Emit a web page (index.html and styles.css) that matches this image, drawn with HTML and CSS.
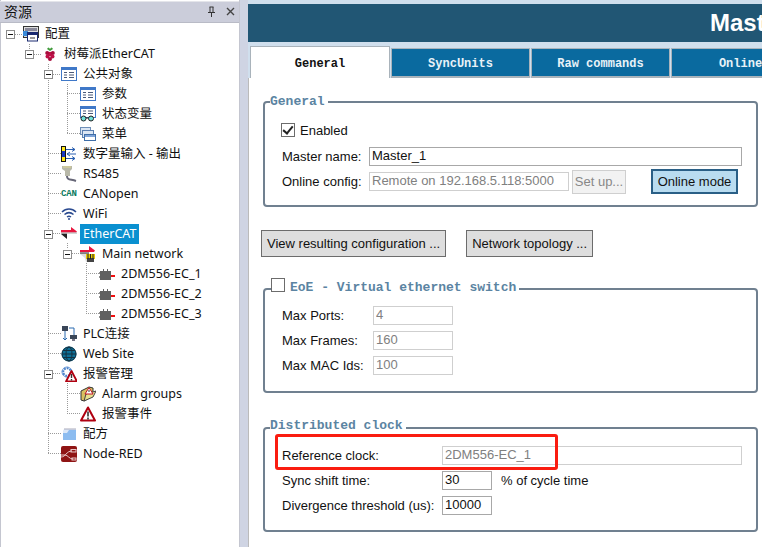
FILE: index.html
```html
<!DOCTYPE html>
<html lang="zh">
<head>
    <meta charset="UTF-8">
    <meta name="viewport" content="width=device-width, initial-scale=1.0">
    <title>EtherCAT Master</title>
    <link rel="stylesheet" href="styles.css">
</head>
<body>
    <svg class="icon-defs" aria-hidden="true">
        <symbol id="i-list" viewBox="0 0 16 16">
            <rect x=".5" y="1.500" width="15" height="13" fill="#fff" stroke="#3f78c8"/>
            <rect x="1" y="2" width="14" height="2" fill="#3f78c8"/>
            <path d="M3 6.500h3M3 9h3M3 11.500h3M8 6.500h5M8 9h5M8 11.500h5" stroke="#4a5a78"/>
        </symbol>
        <symbol id="i-ecat" viewBox="0 0 16 16">
            <path d="M0 4h10V1l6 4.500-1 1H0z" fill="#e8173f"/>
            <path d="M16 7.500H6V13L0 8l1-.5h15z" fill="#222"/>
            <path d="M0 7h16" stroke="#aaa"/>
        </symbol>
        <symbol id="i-device" viewBox="0 0 16 16">
            <path d="M1 5h3V3h1v2h3V3h1v2h3v9H1z" fill="#606060"/>
            <path d="M0 7h1M0 11h1" stroke="#222"/>
            <path d="M12 10h4" stroke="#f01010" stroke-width="2"/>
        </symbol>
        <symbol id="i-triangle" viewBox="0 0 16 16">
            <path d="M8 1.500 15 14.500H1z" fill="#fff" stroke="#b00010" stroke-width="2" stroke-linejoin="round"/>
            <path d="M8 5.500v5M8 11.500v2" stroke="#333" stroke-width="1.600"/>
        </symbol>
    </svg>

    <aside class="sidebar">
        <div class="sidebar-title">
            <span>资源</span>
            <span class="title-tools">
                <svg width="9" height="11" viewBox="0 0 9 11"><path d="M2.500 1h4M3 1v5M6 1v5M1 6.500h7M4.500 7v4" stroke="#333"/></svg>
                <svg width="9" height="9" viewBox="0 0 9 9"><path d="M1 1l7 7M8 1 1 8" stroke="#444" stroke-width="1.400"/></svg>
            </span>
        </div>

        <svg class="tree-lines" width="240" height="480" aria-hidden="true">
            <path d="M15 34.500h8M29.500 44v6M34 54.500h8M48.500 64v389.500M53 74.500h8M67.500 84v49.500M67 93.500h13M67 113.500h13M67 133.500h13M48 153.500h13M48 173.500h13M48 193.500h13M48 213.500h13M53 233.500h8M67.500 243v6M72 253.500h8M86.500 263v50.500M86 273.500h13M86 293.500h13M86 313.500h13M48 333.500h13M48 353.500h13M53 373.500h8M67.500 383v30.500M67 393.500h13M67 413.500h13M48 433.500h13M48 453.500h13" fill="none" stroke="#9a9a9a" stroke-dasharray="1 1"/>
        </svg>

        <ul class="tree">
            <li class="row lv0"><span class="tog"></span>
                <svg class="ico" viewBox="0 0 16 16"><rect x=".5" y=".5" width="15" height="11" fill="#ddd" stroke="#333"/><rect x="2" y="2" width="12" height="3" fill="#889"/><rect x="0" y="5" width="5" height="5" fill="#3a8ad8"/><rect x="4.500" y="6.500" width="10" height="8.500" fill="#fff" stroke="#1a2a70"/><rect x="5" y="7" width="9" height="2" fill="#1a2a70"/><rect x="7" y="11" width="5" height="2" fill="#999"/></svg>
                <span class="label">配置</span></li>
            <li class="row lv1"><span class="tog"></span>
                <svg class="ico" viewBox="0 0 16 16"><path d="M5 3c1-2 2-2 3 0 1-2 2-2 3 0l-3 2z" fill="#3f9a3a"/><circle cx="8" cy="8" r="2.200" fill="#c01048"/><circle cx="5.200" cy="7" r="2" fill="#a80c3c"/><circle cx="10.800" cy="7" r="2" fill="#a80c3c"/><circle cx="5.500" cy="10.500" r="2" fill="#c01048"/><circle cx="10.500" cy="10.500" r="2" fill="#c01048"/><circle cx="8" cy="13" r="2" fill="#a80c3c"/></svg>
                <span class="label">树莓派EtherCAT</span></li>
            <li class="row lv2"><span class="tog"></span>
                <svg class="ico"><use href="#i-list"/></svg>
                <span class="label">公共对象</span></li>
            <li class="row lv3"><span class="tog off"></span>
                <svg class="ico"><use href="#i-list"/></svg>
                <span class="label">参数</span></li>
            <li class="row lv3"><span class="tog off"></span>
                <svg class="ico" viewBox="0 0 16 16"><rect x=".5" y=".5" width="15" height="11" fill="#fff" stroke="#3f78c8"/><rect x="1" y="1" width="14" height="2" fill="#3f78c8"/><path d="M3 5h3M3 7.500h3M8 5h5M8 7.500h5" stroke="#4a5a78"/><circle cx="3.500" cy="12.500" r="2.500" fill="#6fe0d8" stroke="#222"/><circle cx="11" cy="12.500" r="2.500" fill="#6fe0d8" stroke="#222"/><path d="M6 12h2.500" stroke="#222"/></svg>
                <span class="label">状态变量</span></li>
            <li class="row lv3"><span class="tog off"></span>
                <svg class="ico" viewBox="0 0 16 16"><rect x=".5" y="1.500" width="10" height="7" fill="#dbe6f4" stroke="#6f8fb8"/><rect x="2.500" y="4.500" width="11" height="7" fill="#dbe6f4" stroke="#5a7fb0"/><rect x="4.500" y="8.500" width="11" height="6" fill="#fff" stroke="#3f6ea8"/><rect x="5" y="9" width="10" height="2" fill="#7fa4d8"/></svg>
                <span class="label">菜单</span></li>
            <li class="row lv2"><span class="tog off"></span>
                <svg class="ico" viewBox="0 0 16 16"><rect x=".5" y=".5" width="4" height="15" fill="#ffe81a" stroke="#111"/><rect x="1" y="5" width="3" height="6" fill="#1838c0"/><path d="M5 3.500h9M11 1.500l3 2-3 2M15 8H6M9 6 6 8l3 2M5 12.500h9M11 10.500l3 2-3 2" fill="none" stroke="#2a5fb0"/></svg>
                <span class="label">数字量输入 - 输出</span></li>
            <li class="row lv2"><span class="tog off"></span>
                <svg class="ico" viewBox="0 0 16 16"><path d="M1 0h10v3L9 5v5H4V5L1 3z" fill="#b8b8a8"/><path d="M2 1h8" stroke="#e0d890"/><path d="M6 10c0 4 3 3 9 5" fill="none" stroke="#667" stroke-width="2"/></svg>
                <span class="label">RS485</span></li>
            <li class="row lv2"><span class="tog off"></span>
                <span class="can-text">CAN</span>
                <span class="label">CANopen</span></li>
            <li class="row lv2"><span class="tog off"></span>
                <svg class="ico" viewBox="0 0 16 16"><path d="M1 6c4-4 10-4 14 0M3.500 8.500c3-2.500 6-2.500 9 0M6 11c1.500-1 2.500-1 4 0" fill="none" stroke="#2a4a90" stroke-width="1.500"/><path d="M7 13h2" stroke="#2a4a90" stroke-width="1.500"/></svg>
                <span class="label">WiFi</span></li>
            <li class="row lv2"><span class="tog"></span>
                <svg class="ico"><use href="#i-ecat"/></svg>
                <span class="label selected">EtherCAT</span></li>
            <li class="row lv3"><span class="tog"></span>
                <svg class="ico" viewBox="0 0 16 16"><path d="M0 4h9V0l6 4.500-1 1.500H0z" fill="#e8173f"/><path d="M0 7h9v9H6L5 12 0 8z" fill="#ddd"/><path d="M0 7h9" stroke="#222"/><rect x="6" y="8" width="9" height="5" fill="#e8c800"/><rect x="7" y="12" width="7" height="4" fill="#444"/><path d="M8 8v5M10.500 8v5M13 8v5" stroke="#222"/></svg>
                <span class="label">Main network</span></li>
            <li class="row lv4"><span class="tog off"></span>
                <svg class="ico"><use href="#i-device"/></svg>
                <span class="label">2DM556-EC_1</span></li>
            <li class="row lv4"><span class="tog off"></span>
                <svg class="ico"><use href="#i-device"/></svg>
                <span class="label">2DM556-EC_2</span></li>
            <li class="row lv4"><span class="tog off"></span>
                <svg class="ico"><use href="#i-device"/></svg>
                <span class="label">2DM556-EC_3</span></li>
            <li class="row lv2"><span class="tog off"></span>
                <svg class="ico" viewBox="0 0 16 16"><rect x="1" y="0" width="6" height="5" fill="#3a4658"/><rect x="9" y="9" width="7" height="4" fill="#3a4658"/><rect x="11" y="13" width="3" height="2" fill="#778"/><path d="M4 5v9M8 2h5v7" fill="none" stroke="#2a6ab0"/><path d="M2 12l2 2 2-2" fill="none" stroke="#2a6ab0"/></svg>
                <span class="label">PLC连接</span></li>
            <li class="row lv2"><span class="tog off"></span>
                <svg class="ico" viewBox="0 0 16 16"><circle cx="8" cy="8" r="7.500" fill="#0d6f96"/><circle cx="8" cy="8" r="7" fill="none" stroke="#143040"/><ellipse cx="8" cy="8" rx="3" ry="7" fill="none" stroke="#143040"/><path d="M1 8h14M2 4.500h12M2 11.500h12" stroke="#143040"/></svg>
                <span class="label">Web Site</span></li>
            <li class="row lv2"><span class="tog"></span>
                <svg class="ico" viewBox="0 0 16 16"><circle cx="6" cy="6" r="4" fill="#fff" stroke="#4a80c8" stroke-width="2.500" stroke-dasharray="2 1"/><circle cx="6" cy="6" r="5" fill="none" stroke="#7aa4dc"/><path d="M10.500 5 16 15.500H5z" fill="#fff" stroke="#b00010" stroke-width="1.800" stroke-linejoin="round"/><path d="M10.500 8v4M10.500 13v1.500" stroke="#333" stroke-width="1.400"/></svg>
                <span class="label">报警管理</span></li>
            <li class="row lv3"><span class="tog off"></span>
                <svg class="ico" viewBox="0 0 16 16"><path d="M1 5 9 1l4 1v8l-9 5-3-1z" fill="#d8c060" stroke="#333"/><path d="M4 15l2-7 10-3-3 6z" fill="#e8e090" stroke="#444"/><path d="M9 1.500 13 8H5z" fill="#fff" stroke="#c01020"/><path d="M9 4v2" stroke="#333"/></svg>
                <span class="label">Alarm groups</span></li>
            <li class="row lv3"><span class="tog off"></span>
                <svg class="ico"><use href="#i-triangle"/></svg>
                <span class="label">报警事件</span></li>
            <li class="row lv2"><span class="tog off"></span>
                <svg class="ico" viewBox="0 0 16 16"><path d="M2 5 3 3h12v11H2z" fill="#dce8f8"/><path d="M2 7h4l2-3h7v10H2z" fill="#8cbcf0"/><path d="M3 3h12" stroke="#aab"/></svg>
                <span class="label">配方</span></li>
            <li class="row lv2"><span class="tog off"></span>
                <svg class="ico" viewBox="0 0 16 16"><rect width="16" height="16" rx="2" fill="#8f1414"/><path d="M0 11c5 0 5-6 11-6M0 9h4c3 0 4 4 8 4" fill="none" stroke="#e8c8c8"/><rect x="10" y="3.500" width="5" height="2.500" fill="none" stroke="#e8c8c8"/><rect x="11" y="12" width="4" height="2" fill="none" stroke="#e8c8c8"/></svg>
                <span class="label">Node-RED</span></li>
        </ul>
    </aside>

    <main class="main">
        <div class="banner"><h1>Master</h1></div>

        <div class="tabs">
            <div class="tab active">General</div>
            <div class="tab">SyncUnits</div>
            <div class="tab">Raw commands</div>
            <div class="tab">Online</div>
        </div>

        <div class="panel">
            <fieldset class="group first">
                <legend>General</legend>
                <label class="check-row"><input type="checkbox" checked> Enabled</label>
                <div class="field general-field">
                    <label>Master name:</label>
                    <input class="grow" type="text" value="Master_1">
                </div>
                <div class="field general-field">
                    <label>Online config:</label>
                    <input class="online-input" type="text" value="Remote on 192.168.5.118:5000" disabled>
                    <button class="setup-btn" disabled>Set up...</button>
                    <button class="online-btn">Online mode</button>
                </div>
            </fieldset>

            <div class="actions">
                <button class="action-btn">View resulting configuration ...</button>
                <button class="action-btn">Network topology ...</button>
            </div>

            <fieldset class="group eoe">
                <legend><input type="checkbox"> EoE - Virtual ethernet switch</legend>
                <div class="field eoe-field">
                    <label>Max Ports:</label>
                    <input class="short" type="text" value="4" disabled>
                </div>
                <div class="field eoe-field">
                    <label>Max Frames:</label>
                    <input class="short" type="text" value="160" disabled>
                </div>
                <div class="field eoe-field">
                    <label>Max MAC Ids:</label>
                    <input class="short" type="text" value="100" disabled>
                </div>
            </fieldset>

            <fieldset class="group clock">
                <legend>Distributed clock</legend>
                <div class="field clock-field">
                    <label>Reference clock:</label>
                    <input class="grow" type="text" value="2DM556-EC_1" disabled>
                </div>
                <div class="field clock-field">
                    <label>Sync shift time:</label>
                    <input class="tiny" type="text" value="30">
                    <span class="unit">% of cycle time</span>
                </div>
                <div class="field clock-field">
                    <label>Divergence threshold (us):</label>
                    <input class="tiny" type="text" value="10000">
                </div>
                <div class="red-box"></div>
            </fieldset>
        </div>
    </main>
</body>
</html>
```

FILE: styles.css
```css
* {
    box-sizing: border-box;
}
html, body {
    height: 100%;
}
body {
    display: flex;
    margin: 0;
    overflow: hidden;
    background-color: #cfd4e3;
    font-family: "Liberation Sans", Arial, sans-serif;
    font-size: 13px;
    color: #111;
}
.icon-defs {
    position: absolute;
    width: 0;
    height: 0;
}

/* left tree */
.sidebar {
    position: relative;
    flex: none;
    width: 240px;
    margin-right: 8px;
    padding: 1px 2px 0 1px;
    background-color: #fff;
    border-left: 1px solid #c4c6d0;
    border-right: 1px solid #c4c6d0;
}
.sidebar-title {
    display: flex;
    justify-content: space-between;
    align-items: center;
    height: 22px;
    margin: 0 -2px 0 -2px;
    padding: 0 4px 2px 4px;
    background-color: #cbcdda;
    border-top: 1px solid #e4e5ea;
    border-bottom: 1px solid #b9bbc6;
    font-family: "Noto Sans CJK SC", sans-serif;
    font-size: 14px;
}
.title-tools {
    display: flex;
    align-items: center;
    gap: 10px;
}
.tree-lines {
    position: absolute;
    left: -1px;
    top: 0;
}
.tree {
    position: relative;
    margin: 1px 0 0;
    padding: 0;
    list-style: none;
    font-family: "Noto Sans", "Noto Sans CJK SC", sans-serif;
    font-size: 12.5px;
}
.row {
    display: flex;
    align-items: center;
    height: 20px;
}
.lv0 { padding-left: 4px; }
.lv1 { padding-left: 23px; }
.lv2 { padding-left: 42px; }
.lv3 { padding-left: 61px; }
.lv4 { padding-left: 80px; }
.tog {
    position: relative;
    flex: none;
    width: 9px;
    height: 9px;
    margin-right: 8px;
    background-color: #fff;
    border: 1px solid #8c8c8c;
}
.tog::after {
    content: "";
    position: absolute;
    left: 1px;
    top: 3px;
    width: 5px;
    height: 1px;
    background-color: #111;
}
.tog.off {
    visibility: hidden;
}
.ico {
    flex: none;
    width: 16px;
    height: 16px;
    background-color: #fff;
}
.can-text {
    flex: none;
    width: 16px;
    font-family: "Liberation Mono", monospace;
    font-size: 9px;
    line-height: 16px;
    font-weight: bold;
    letter-spacing: -0.1px;
    color: #0b7a60;
    background-color: #fff;
}
.label {
    height: 20px;
    margin-left: 3px;
    padding: 0 3px;
    line-height: 19px;
    white-space: nowrap;
    background-color: #fff;
}
.label.selected {
    background-color: #0a90d0;
    color: #fff;
}

/* right side */
.main {
    flex: 1;
    min-width: 0;
    display: flex;
    flex-direction: column;
    background-color: #d0dfed;
    padding-top: 4px;
}
.banner {
    flex: none;
    height: 38px;
    overflow: hidden;
    background-color: #215674;
    white-space: nowrap;
}
.banner h1 {
    margin: 0;
    padding-left: 462px;
    font-size: 24px;
    line-height: 38px;
    color: #fff;
}
.tabs {
    flex: none;
    display: flex;
    align-items: flex-end;
    gap: 1px;
    height: 36px;
    padding-left: 2px;
    overflow: hidden;
    font-family: "Liberation Mono", monospace;
    font-size: 12px;
    font-weight: bold;
}
.tab {
    flex: none;
    width: 139px;
    height: 30px;
    padding-top: 2px;
    line-height: 27px;
    text-align: center;
    background-color: #0a6a9f;
    border: 1px solid #a9b3bb;
    border-bottom-width: 2px;
    color: #e8f2f8;
}
.tab.active {
    width: 140px;
    height: 32px;
    padding-top: 4px;
    background-color: #fff;
    border-bottom: none;
    color: #111;
}
.panel {
    flex: 1;
    padding: 16px 4px 0 14px;
    background-color: #fff;
    border-left: 1px solid #bbb;
}
.group {
    position: relative;
    margin: 0;
    padding: 0 0 0 17px;
    border: 2px solid #708090;
    border-radius: 4px;
}
.group legend {
    margin-left: -12px;
    padding: 0 3px 0 0;
    font-family: "Liberation Mono", monospace;
    font-size: 13px;
    font-weight: bold;
    color: #5b84a2;
    line-height: 15px;
}
.first {
    height: 113px;
}
.check-row {
    display: flex;
    align-items: center;
    gap: 5px;
    height: 22px;
    margin-top: 10px;
    margin-bottom: 3px;
    margin-left: -1px;
}
input[type="checkbox"] {
    appearance: none;
    width: 14px;
    height: 14px;
    margin: 0;
    background-color: #fff;
    border: 1px solid #6c6c6c;
}
.check-row input {
    position: relative;
}
.check-row input::after {
    content: "";
    position: absolute;
    left: 3px;
    top: 0;
    width: 4px;
    height: 8px;
    border: solid #222;
    border-width: 0 2px 2px 0;
    transform: rotate(40deg);
}
.field {
    display: flex;
    align-items: center;
    height: 25px;
}
.general-field label { width: 87px; flex: none; }
.eoe-field label { width: 91px; flex: none; }
.clock-field label { width: 160px; flex: none; }
input[type="text"] {
    height: 19px;
    padding: 0 2px 2px;
    font-family: "Liberation Sans", Arial, sans-serif;
    font-size: 13px;
    color: #111;
    background-color: #fff;
    border: 1px solid #a8a8a8;
    border-radius: 0;
}
input[type="text"]:disabled {
    color: #808080;
    border-color: #cfcfcf;
}
.grow {
    width: 373px;
}
.clock-field .grow {
    width: 300px;
}
.online-input {
    width: 200px;
}
.short {
    width: 80px;
}
.tiny {
    width: 50px;
}
.setup-btn {
    width: 54px;
    height: 24px;
    margin-left: 3px;
    padding: 0;
    font: 13px "Liberation Sans", Arial, sans-serif;
    color: #888;
    background-color: #f2f2f2;
    border: 1px solid #cfcfcf;
}
.online-btn {
    width: 87px;
    height: 25px;
    margin-left: 25px;
    padding: 0;
    font: 13px "Liberation Sans", Arial, sans-serif;
    color: #111;
    background-color: #b9dcf0;
    border: 2px solid #2a5f86;
}
.actions {
    display: flex;
    gap: 20px;
    margin: 23px 0 24px -2px;
}
.action-btn {
    height: 27px;
    padding: 0 5px;
    font: 13px "Liberation Sans", Arial, sans-serif;
    color: #111;
    background-color: #dedede;
    border: 1px solid #6c6c6c;
}
.eoe {
    height: 112px;
}
.eoe legend {
    position: relative;
    top: -1px;
    display: flex;
    align-items: center;
    margin-left: -11px;
    gap: 5px;
}
.eoe legend input {
    margin-top: -5px;
}
.eoe-field:first-of-type {
    margin-top: 7px;
}
.clock {
    height: 112px;
    margin-top: 27px;
}
.clock legend {
    position: relative;
    top: -2px;
}
.clock-field:first-of-type {
    margin-top: 8px;
}
.unit {
    margin-left: 9px;
}

/* red annotation on the screenshot */
.red-box {
    position: absolute;
    left: 10px;
    top: -1px;
    width: 283px;
    height: 36px;
    border: 3px solid #fa1c10;
    border-radius: 3px;
}
```
